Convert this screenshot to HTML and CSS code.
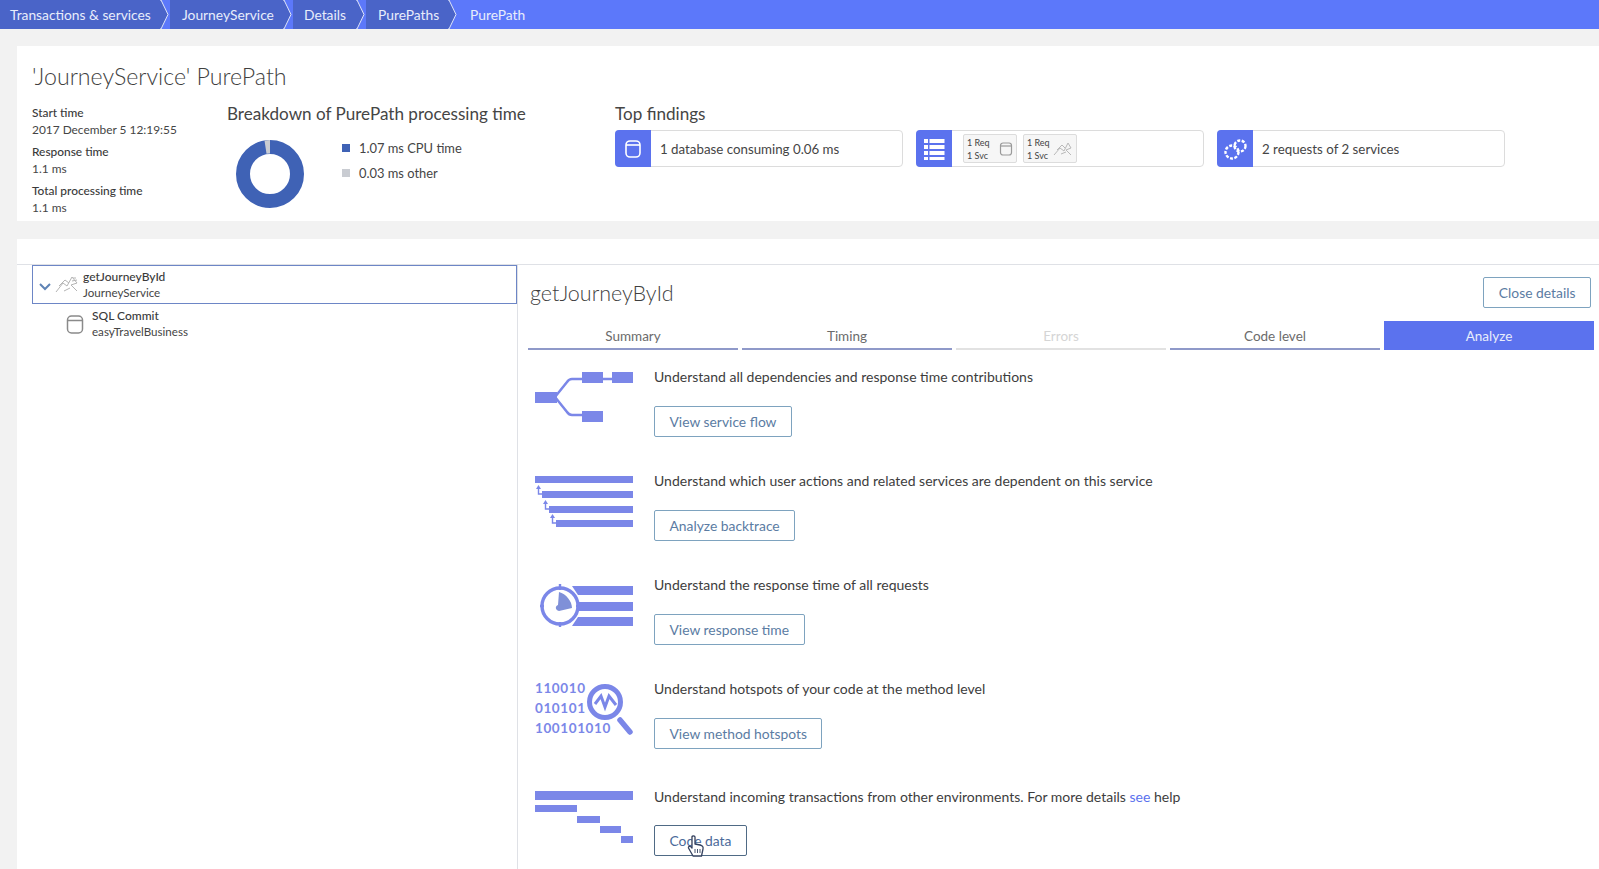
FILE: index.html
```html
<!DOCTYPE html>
<html lang="en">
<head>
    <meta charset="UTF-8">
    <meta name="viewport" content="width=device-width, initial-scale=1.0">
    <title>PurePath</title>
    <link rel="stylesheet" href="styles.css">
</head>
<body>
    <nav class="crumbs">
        <a class="crumb crumb-first">Transactions &amp; services</a>
        <svg class="crumb-sep" width="10" height="29" viewBox="0 0 10 29"><path d="M0 0 L1 0 L8 14.5 L1 29 L0 29" /></svg>
        <a class="crumb crumb-2">JourneyService</a>
        <svg class="crumb-sep" width="10" height="29" viewBox="0 0 10 29"><path d="M0 0 L1 0 L8 14.5 L1 29 L0 29" /></svg>
        <a class="crumb crumb-3">Details</a>
        <svg class="crumb-sep" width="10" height="29" viewBox="0 0 10 29"><path d="M0 0 L1 0 L8 14.5 L1 29 L0 29" /></svg>
        <a class="crumb crumb-4">PurePaths</a>
        <svg class="crumb-sep" width="10" height="29" viewBox="0 0 10 29"><path d="M0 0 L1 0 L8 14.5 L1 29 L0 29" /></svg>
        <a class="crumb crumb-last">PurePath</a>
    </nav>

    <main class="page">
        <section class="card summary">
            <h1>'JourneyService' PurePath</h1>
            <div class="summary-row">
                <dl class="facts">
                    <dt>Start time</dt>
                    <dd>2017 December 5 12:19:55</dd>
                    <dt>Response time</dt>
                    <dd>1.1 ms</dd>
                    <dt>Total processing time</dt>
                    <dd>1.1 ms</dd>
                </dl>

                <div class="breakdown">
                    <h2>Breakdown of PurePath processing time</h2>
                    <div class="breakdown-body">
                        <svg class="donut" width="70" height="70" viewBox="0 0 70 70">
                            <circle cx="35" cy="35" r="27" fill="none" stroke="#3f62b5" stroke-width="14" />
                            <path d="M35 1 V14.5 L31.5 14.8 L29.5 1.4 Z" fill="#c9ccd2" />
                        </svg>
                        <ul class="legend">
                            <li><span class="swatch swatch-cpu"></span>1.07 ms CPU time</li>
                            <li><span class="swatch swatch-other"></span>0.03 ms other</li>
                        </ul>
                    </div>
                </div>

                <div class="findings">
                    <h2>Top findings</h2>
                    <div class="finding-row">
                        <div class="finding">
                            <span class="finding-icon">
                                <svg width="18" height="20" viewBox="0 0 18 20" fill="none" stroke="#fff" stroke-width="1.6"><rect x="2" y="2" width="14" height="16" rx="4" /><path d="M2 6 H16" /></svg>
                            </span>
                            <span class="finding-text">1 database consuming 0.06 ms</span>
                        </div>
                        <div class="finding">
                            <span class="finding-icon">
                                <svg width="22" height="24" viewBox="0 0 22 24" fill="#fff"><rect x="1" y="2" width="4" height="4" /><rect x="6.5" y="2" width="15" height="4" /><rect x="1" y="8" width="4" height="4" /><rect x="6.5" y="8" width="15" height="4" /><rect x="1" y="14" width="4" height="4" /><rect x="6.5" y="14" width="15" height="4" /><rect x="1" y="20" width="4" height="3" /><rect x="6.5" y="20" width="15" height="3" /></svg>
                            </span>
                            <span class="chip">
                                <span class="chip-text">1 Req<br>1 Svc</span>
                                <svg width="14" height="16" viewBox="0 0 14 16" fill="none" stroke="#9a9a9a" stroke-width="1.2"><rect x="1.5" y="2" width="11" height="12" rx="2.5" /><path d="M1.5 5 H12.5" /></svg>
                            </span>
                            <span class="chip">
                                <span class="chip-text">1 Req<br>1 Svc</span>
                                <svg width="20" height="16" viewBox="0 0 20 16" fill="none" stroke="#b9b9b9" stroke-width="1"><path d="M1 14 L7 7 L11 10 L15 2 L18 7 L13 9 L18 14 M4 9 L9 4 L12 7 M8 13 L13 11" /></svg>
                            </span>
                        </div>
                        <div class="finding">
                            <span class="finding-icon">
                                <svg width="24" height="24" viewBox="0 0 24 24" fill="none" stroke="#fff" stroke-width="2.4" stroke-dasharray="3 1.5"><circle cx="9" cy="15" r="6.5" /><circle cx="17" cy="9" r="5.5" /></svg>
                            </span>
                            <span class="finding-text">2 requests of 2 services</span>
                        </div>
                    </div>
                </div>
            </div>
        </section>

        <section class="card details">
            <aside class="tree">
                <div class="tree-node tree-node-selected">
                    <svg class="tree-arrow" width="12" height="8" viewBox="0 0 12 8" fill="none" stroke="#5f83b5" stroke-width="2"><path d="M1 1 L6 6 L11 1" /></svg>
                    <svg width="24" height="20" viewBox="0 0 24 20" fill="none" stroke="#b4b4b4" stroke-width="1"><path d="M1 17 L8 8 L12 11 L17 2 L22 8 L16 10 L22 16 M4 11 L10 5 L14 8 M9 16 L15 13 M18 3 L21 3 M17 6 L22 5" /></svg>
                    <div class="tree-label">
                        <strong>getJourneyById</strong>
                        <span>JourneyService</span>
                    </div>
                </div>
                <div class="tree-node tree-node-child">
                    <svg width="18" height="20" viewBox="0 0 18 20" fill="none" stroke="#8a8a8a" stroke-width="1.5"><rect x="1.5" y="2" width="15" height="17" rx="4" /><path d="M1.5 6.5 H16.5" /></svg>
                    <div class="tree-label">
                        <strong>SQL Commit</strong>
                        <span>easyTravelBusiness</span>
                    </div>
                </div>
            </aside>

            <div class="pane">
                <header class="pane-head">
                    <h2 class="pane-title">getJourneyById</h2>
                    <button class="btn btn-close" type="button">Close details</button>
                </header>

                <div class="tabs">
                    <div class="tab">Summary</div>
                    <div class="tab">Timing</div>
                    <div class="tab tab-disabled">Errors</div>
                    <div class="tab">Code level</div>
                    <div class="tab tab-active">Analyze</div>
                </div>

                <div class="actions">
                    <div class="action">
                        <svg class="action-icon" width="98" height="54" viewBox="0 0 98 54">
                            <path d="M20 29 L32 14 Q34 11 37 11 H47 M57 11 H77 M20 29 L32 44 Q34 47 37 47 H47" fill="none" stroke="#7b87e8" stroke-width="2.5" />
                            <rect x="47" y="4" width="21" height="11" /><rect x="77" y="4" width="21" height="11" /><rect y="24" width="22" height="11" /><rect x="47" y="43" width="21" height="11" />
                        </svg>
                        <div class="action-body">
                            <p>Understand all dependencies and response time contributions</p>
                            <button class="btn" type="button">View service flow</button>
                        </div>
                    </div>

                    <div class="action">
                        <svg class="action-icon" width="98" height="56" viewBox="0 0 98 56">
                            <rect y="4" width="98" height="7" /><rect x="7" y="19" width="91" height="7" /><rect x="14" y="34" width="84" height="7" /><rect x="21" y="48" width="77" height="7" />
                            <path d="M3.5 16 V22 H7 M10.5 31 V37 H14 M17.5 45 V51 H21" fill="none" stroke="#7b87e8" stroke-width="1.4" />
                            <path d="M3.5 13 L6 17 H1 Z M10.5 28 L13 32 H8 Z M17.5 42 L20 46 H15 Z" />
                        </svg>
                        <div class="action-body">
                            <p>Understand which user actions and related services are dependent on this service</p>
                            <button class="btn" type="button">Analyze backtrace</button>
                        </div>
                    </div>

                    <div class="action">
                        <svg class="action-icon" width="98" height="54" viewBox="0 0 98 54">
                            <path d="M37 10 H98 V19 H43 Z M44 26 H98 V35 H44 Z M43 41 H98 V50 H37 Z" />
                            <circle cx="25" cy="30" r="18" fill="#fff" stroke="#7b87e8" stroke-width="3.4" />
                            <path d="M25 8 V14 M25 46 V51 M5 30 H9 M41 30 H45" stroke="#7b87e8" stroke-width="2.4" />
                            <path d="M24 16 C31 18 37 25 37 32 L24 35 C20 34 20 30 23 29 Z" fill="#7f90d8" />
                        </svg>
                        <div class="action-body">
                            <p>Understand the response time of all requests</p>
                            <button class="btn" type="button">View response time</button>
                        </div>
                    </div>

                    <div class="action">
                        <svg class="action-icon" width="98" height="64" viewBox="0 0 98 64">
                            <text class="bits" x="0" y="13">110010</text>
                            <text class="bits" x="0" y="33">010101</text>
                            <text class="bits" x="0" y="53">100101010</text>
                            <circle cx="70" cy="22" r="15.5" fill="#fff" stroke="#7b87e8" stroke-width="5" />
                            <path d="M60 24 L66 16 L70 27 L74 16 L81 25" fill="none" stroke="#7b87e8" stroke-width="3" />
                            <path d="M85 40 L95 52" stroke="#7b87e8" stroke-width="5.5" stroke-linecap="round" />
                        </svg>
                        <div class="action-body">
                            <p>Understand hotspots of your code at the method level</p>
                            <button class="btn" type="button">View method hotspots</button>
                        </div>
                    </div>

                    <div class="action action-last">
                        <svg class="action-icon" width="98" height="56" viewBox="0 0 98 56">
                            <rect y="3" width="98" height="9" /><rect y="17" width="42" height="7" /><rect x="42" y="28" width="23" height="7" /><rect x="65" y="38" width="21" height="7" /><rect x="86" y="48" width="12" height="7" />
                        </svg>
                        <div class="action-body">
                            <p>Understand incoming transactions from other environments. For more details <a class="link">see</a> help</p>
                            <button class="btn btn-hover" type="button">Code data</button>
                        </div>
                    </div>
                </div>
            </div>
        </section>
    </main>

    <svg class="cursor" width="18" height="24" viewBox="0 0 18 24">
        <path d="M5 2 C5 0.5 8 0.5 8 2 V9 L13 10 C15.5 10.5 16.5 12 16 14 L14.5 21 H6 L1.5 13 C1 11.5 3 10.5 5 13 Z" fill="#fff" stroke="#33415f" stroke-width="1.3" stroke-linejoin="round" />
        <path d="M8 14 V18 M10.5 14 V18 M13 14 V18" stroke="#33415f" stroke-width="0.9" />
    </svg>
</body>
</html>
```

FILE: styles.css
```css
* {
    box-sizing: border-box;
}

html, body {
    height: 869px;
    margin: 0;
    overflow: hidden;
}

body {
    position: relative;
    font-family: Lato, "Open Sans", sans-serif;
    font-size: 14px;
    color: #454545;
    background-color: #f2f2f2;
}

h1, h2, p, ul, dl, dd {
    margin: 0;
    padding: 0;
    font-weight: normal;
}

/* breadcrumb */
.crumbs {
    display: flex;
    align-items: stretch;
    height: 29px;
    background-color: #5c78fa;
    color: #e8edfb;
    font-size: 13.8px;
}

.crumb {
    display: flex;
    flex: none;
    align-items: center;
    height: 29px;
    white-space: nowrap;
    background-color: #4a64c8;
}

.crumb-first {
    padding-left: 10px;
    width: 160px;
}

.crumb-2 {
    padding-left: 12px;
    width: 113px;
}

.crumb-3 {
    padding-left: 11px;
    width: 63px;
}

.crumb-4 {
    padding-left: 12px;
    width: 82px;
}

.crumb-last {
    padding-left: 12px;
    background-color: transparent;
}

.crumb-sep {
    flex: none;
}

.crumb-sep path {
    fill: #4a64c8;
    stroke: #dfe5f8;
    stroke-width: 1;
}

/* cards */
.page {
    padding: 17px 0 0 17px;
}

.card {
    background-color: #fff;
}

.summary {
    height: 175px;
    padding: 16px 15px 0;
}

.summary h1 {
    font-size: 23.2px;
    font-weight: 300;
    line-height: 28px;
    color: #3f3f3f;
}

.summary-row {
    display: flex;
    margin-top: 13px;
}

.facts {
    width: 195px;
    margin-top: 1px;
    font-size: 11.9px;
    line-height: 17px;
}

.facts dt {
    font-weight: 500;
    color: #3a3a3a;
}

.facts dd {
    margin-bottom: 5px;
}

.breakdown {
    width: 388px;
}

.summary-row h2 {
    font-size: 17.1px;
    font-weight: 400;
    line-height: 22px;
    color: #454545;
}

.breakdown-body {
    display: flex;
    margin-top: 14px;
    padding-left: 8px;
}

.legend {
    list-style: none;
    margin-left: 37px;
    margin-top: -4px;
}

.legend li {
    display: flex;
    align-items: center;
    height: 25.5px;
    font-size: 12.9px;
}

.swatch {
    width: 8px;
    height: 8px;
    margin-right: 9px;
}

.swatch-cpu {
    background-color: #3f62b5;
}

.swatch-other {
    background-color: #c9ccd2;
}

.findings {
    flex: 1;
}

.finding-row {
    display: flex;
    gap: 13px;
    margin-top: 5px;
}

.finding {
    display: flex;
    align-items: center;
    width: 288px;
    height: 37px;
    border: 1px solid #dcdcdc;
    border-radius: 4px;
    background-color: #fff;
}

.finding-icon {
    display: flex;
    align-items: center;
    justify-content: center;
    flex: none;
    width: 36px;
    height: 37px;
    margin: -1px 0 -1px -1px;
    border-radius: 4px 0 0 4px;
    background-color: #5b72ee;
}

.finding-text {
    margin-left: 9px;
    font-size: 13.3px;
}

.chip {
    display: flex;
    align-items: center;
    justify-content: space-between;
    width: 54px;
    height: 29px;
    margin-left: 11px;
    padding: 0 3px;
    border: 1px solid #dcdcdc;
    border-radius: 2px;
    background-color: #f6f6f6;
}

.chip + .chip {
    margin-left: 6px;
}

.chip-text {
    font-size: 9px;
    line-height: 13px;
}

/* details */
.details {
    display: flex;
    height: 631px;
    margin-top: 18px;
    padding-top: 25px;
    background-image: linear-gradient(#dfe1e6, #dfe1e6);
    background-repeat: no-repeat;
    background-size: 100% 1px;
    background-position: 0 25px;
}

.tree {
    flex: none;
    width: 500px;
    padding: 1px 0 0 15px;
}

.tree-node {
    display: flex;
    align-items: center;
    height: 39px;
}

.tree-node-selected {
    padding-left: 6px;
    border: 1px solid #6d86c6;
    gap: 4px;
}

.tree-arrow {
    margin-top: 4px;
}

.tree-node-child {
    padding-left: 34px;
    gap: 8px;
}

.tree-label {
    display: flex;
    flex-direction: column;
    font-size: 11.6px;
    line-height: 15.5px;
}

.tree-label strong {
    font-size: 12px;
    font-weight: 500;
    color: #3a3a3a;
}

.pane {
    flex: 1;
    padding: 0 5px 0 10px;
    border-left: 1px solid #dfe1e6;
}

.pane-head {
    display: flex;
    align-items: flex-start;
    justify-content: space-between;
    height: 57px;
    padding: 13px 3px 0 2px;
}

.pane-title {
    margin-top: 1px;
    font-size: 21.5px;
    font-weight: 300;
    line-height: 30px;
    color: #3f3f3f;
}

.btn {
    height: 31px;
    padding: 0 14.5px;
    border: 1px solid #7ea3bf;
    border-radius: 2px;
    background-color: #fff;
    color: #5b7ca3;
    font-family: inherit;
    font-size: 13.85px;
}

.btn-hover {
    border-color: #4f6a85;
    color: #4b6a9a;
}

.tabs {
    display: flex;
    gap: 4px;
}

.tab {
    flex: 1;
    height: 29px;
    border-bottom: 2px solid #8f99c9;
    line-height: 30px;
    text-align: center;
    font-size: 13.5px;
    color: #6b6b6b;
}

.tab-disabled {
    border-bottom-color: #e2e2e2;
    color: #d5d5d5;
}

.tab-active {
    border-bottom-color: #5b72ee;
    background-color: #5b72ee;
    color: #e8edfb;
}

/* analyze list */
.actions {
    padding: 18px 0 0 7px;
}

.action {
    display: flex;
    height: 104px;
}

.action-last {
    margin-top: 4px;
}

.action-icon {
    flex: none;
    margin-right: 21px;
    fill: #7b87e8;
}

.action-body p {
    font-size: 14px;
    line-height: 18px;
    color: #3d3d3d;
    margin-bottom: 20px;
}

.action-last p {
    margin-bottom: 19px;
}

.bits {
    font-size: 13.5px;
    font-weight: 700;
    letter-spacing: 0.6px;
    fill: #7b87e8;
}

.link {
    color: #5b72ee;
}

.cursor {
    position: absolute;
    left: 687px;
    top: 835px;
}
```
